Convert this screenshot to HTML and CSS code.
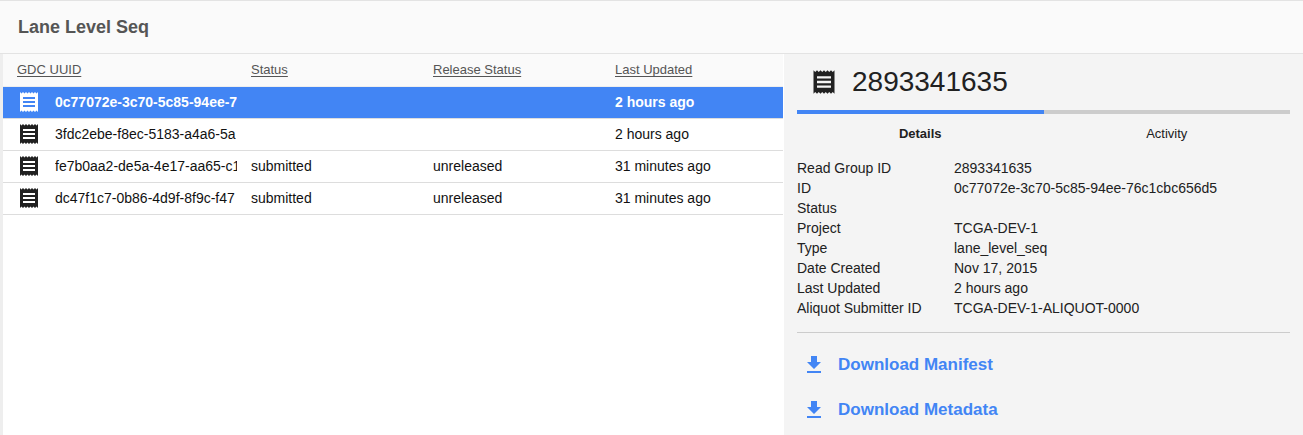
FILE: index.html
```html
<!DOCTYPE html>
<html lang="en">
<head>
<meta charset="utf-8">
<title>Lane Level Seq</title>
<link rel="stylesheet" href="styles.css">
</head>
<body>
<svg width="0" height="0" class="sprite" aria-hidden="true">
  <symbol id="receipt" viewBox="0 0 24 24"><path d="M18 17H6v-2h12v2zm0-4H6v-2h12v2zm0-4H6V7h12v2zM3 22l1.5-1.5L6 22l1.5-1.5L9 22l1.5-1.5L12 22l1.5-1.5L15 22l1.5-1.5L18 22l1.5-1.5L21 22V2l-1.5 1.5L18 2l-1.5 1.5L15 2l-1.5 1.5L12 2l-1.5 1.5L9 2 7.500 3.500 6 2 4.500 3.500 3 2v20z"/></symbol>
  <symbol id="download" viewBox="0 0 24 24"><path d="M19 9h-4V3H9v6H5l7 7 7-7zM5 18v2h14v-2H5z"/></symbol>
</svg>
<header class="page-header"><h1 class="page-title">Lane Level Seq</h1></header>
<main class="content">
  <section class="list">
    <table class="entities">
      <thead>
        <tr>
          <th class="col-id" scope="col"><a href="#uuid">GDC UUID</a></th>
          <th scope="col"><a href="#status">Status</a></th>
          <th scope="col"><a href="#release">Release Status</a></th>
          <th scope="col"><a href="#updated">Last Updated</a></th>
        </tr>
      </thead>
      <tbody>
        <tr class="selected">
          <td><div class="entity"><svg class="icon"><use href="#receipt"/></svg><span class="uuid">0c77072e-3c70-5c85-94ee-76c1cbc656d5</span></div></td>
          <td></td><td></td><td>2 hours ago</td>
        </tr>
        <tr>
          <td><div class="entity"><svg class="icon"><use href="#receipt"/></svg><span class="uuid">3fdc2ebe-f8ec-5183-a4a6-5a</span></div></td>
          <td></td><td></td><td>2 hours ago</td>
        </tr>
        <tr>
          <td><div class="entity"><svg class="icon"><use href="#receipt"/></svg><span class="uuid">fe7b0aa2-de5a-4e17-aa65-c1</span></div></td>
          <td>submitted</td><td>unreleased</td><td>31 minutes ago</td>
        </tr>
        <tr>
          <td><div class="entity"><svg class="icon"><use href="#receipt"/></svg><span class="uuid">dc47f1c7-0b86-4d9f-8f9c-f47</span></div></td>
          <td>submitted</td><td>unreleased</td><td>31 minutes ago</td>
        </tr>
      </tbody>
    </table>
  </section>
  <aside class="panel">
    <h2 class="panel-title"><svg class="icon icon-large"><use href="#receipt"/></svg>2893341635</h2>
    <div class="tabs" role="tablist">
      <button class="tab active" type="button" role="tab" aria-selected="true">Details</button>
      <button class="tab" type="button" role="tab" aria-selected="false">Activity</button>
    </div>
    <dl class="details">
      <dt>Read Group ID</dt><dd>2893341635</dd>
      <dt>ID</dt><dd>0c77072e-3c70-5c85-94ee-76c1cbc656d5</dd>
      <dt>Status</dt><dd></dd>
      <dt>Project</dt><dd>TCGA-DEV-1</dd>
      <dt>Type</dt><dd>lane_level_seq</dd>
      <dt>Date Created</dt><dd>Nov 17, 2015</dd>
      <dt>Last Updated</dt><dd>2 hours ago</dd>
      <dt>Aliquot Submitter ID</dt><dd>TCGA-DEV-1-ALIQUOT-0000</dd>
    </dl>
    <div class="downloads">
      <a class="download" href="#manifest"><svg class="icon"><use href="#download"/></svg>Download Manifest</a>
      <a class="download" href="#metadata"><svg class="icon"><use href="#download"/></svg>Download Metadata</a>
    </div>
  </aside>
</main>
</body>
</html>
```
FILE: styles.css
```css
* { box-sizing: border-box; }
body {
  margin: 0;
  min-height: 100vh;
  display: flex;
  flex-direction: column;
  font: 14px/20px "Liberation Sans", Arial, sans-serif;
  color: #212121;
  background: #fff;
}
.sprite { position: absolute; }
.icon { width: 24px; height: 24px; flex: none; fill: currentColor; }
.page-header {
  padding: 14px 18px 13px;
  border-top: 1px solid #e3e3e3;
  border-bottom: 1px solid #e3e3e3;
  background: #fafafa;
}
.page-title { margin: 0; font-size: 18px; line-height: 25px; color: #555; }
.content {
  flex: 1;
  display: grid;
  grid-template-columns: 3fr 2fr;
  border-left: 3px solid #eee;
}
.list { min-width: 0; }
.entities { width: 100%; table-layout: fixed; border-collapse: collapse; }
.entities th, .entities td { padding: 0 0 0 14px; text-align: left; white-space: nowrap; }
.entities th {
  height: 32px;
  padding-top: 1px;
  font-size: 13px;
  font-weight: normal;
  background: #fafafa;
  border-bottom: 1px solid #eee;
}
.entities th a { color: #555; text-underline-offset: 2px; }
.entities td { height: 32px; border-bottom: 1px solid #ddd; color: #111; }
.col-id { width: 30%; }
.entity { display: flex; align-items: center; gap: 14px; color: #212121; }
.uuid { min-width: 0; overflow: hidden; color: #111; }
.selected { background: #4285f4; font-weight: bold; }
.selected td, .selected .entity, .selected .uuid { color: #fff; }
.panel {
  min-width: 0;
  padding: 12px 13px 12px 13px;
  border-left: 1px solid #fff;
  background: #f4f4f4;
}
.panel-title {
  display: flex;
  align-items: center;
  gap: 14px;
  margin: 0 0 12px;
  padding-left: 13px;
  font-size: 28px;
  font-weight: normal;
  line-height: 32px;
}
.icon-large { width: 28px; height: 28px; }
.tabs { display: flex; }
.tab {
  flex: 1;
  padding: 10px 0 8px;
  border: 0;
  border-top: 4px solid #ccc;
  background: none;
  font: 13px/20px "Liberation Sans", Arial, sans-serif;
  color: #212121;
}
.tab.active { border-top-color: #4285f4; font-weight: bold; }
.details {
  display: grid;
  grid-template-columns: 157px 1fr;
  grid-auto-rows: minmax(20px, auto);
  margin: 6px 0 0;
  padding-bottom: 14px;
  border-bottom: 1px solid #ccc;
}
.details dd { margin: 0; }
.downloads { display: grid; justify-items: start; gap: 21px; padding: 20px 0 0 5px; }
.download {
  display: flex;
  align-items: center;
  gap: 12px;
  font-size: 17px;
  line-height: 24px;
  font-weight: bold;
  color: #4285f4;
  text-decoration: none;
}
```
